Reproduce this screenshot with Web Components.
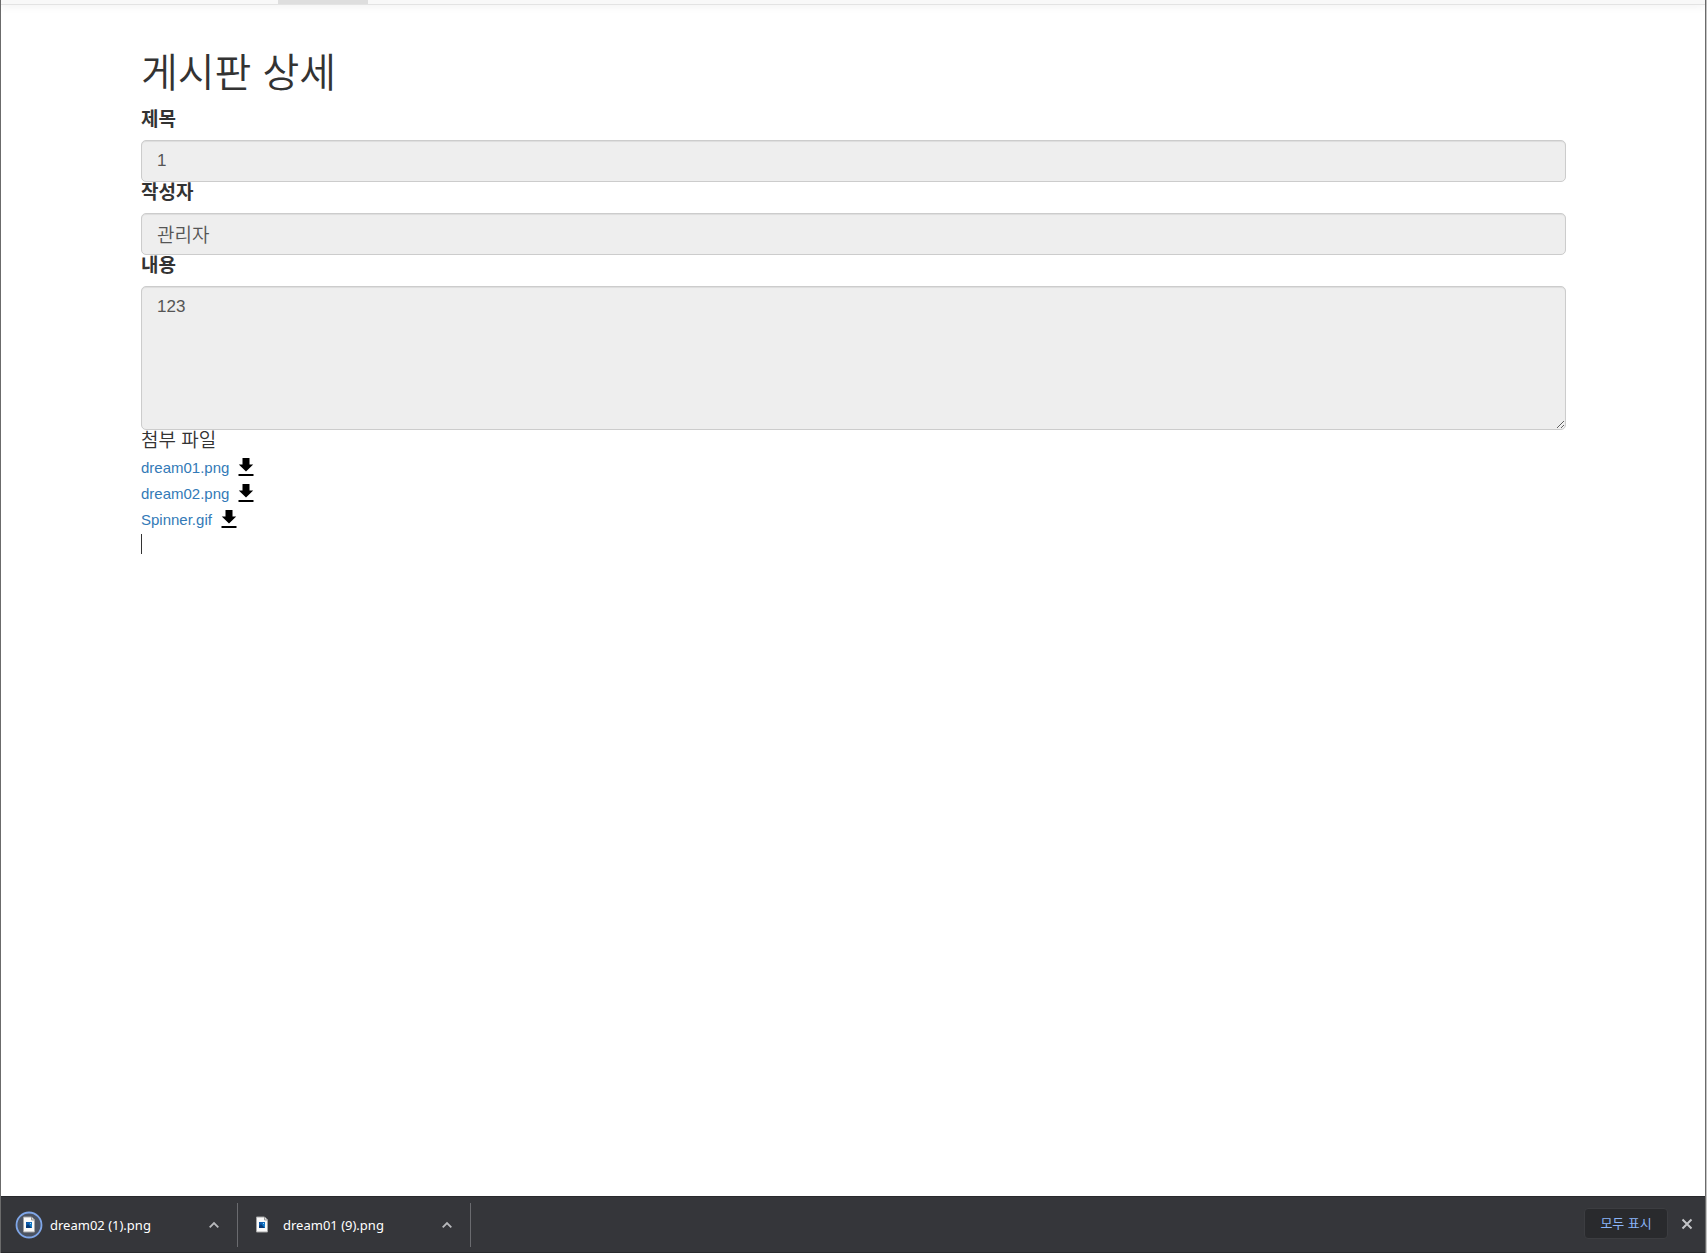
<!DOCTYPE html>
<html lang="ko">
<head>
<meta charset="UTF-8">
<meta name="viewport" content="width=device-width, initial-scale=1">
<title>게시판 상세</title>
<style>
html, body {
    height: 100%;
    margin: 0;
}

body {
    font-family: "Liberation Sans", "Noto Sans CJK KR", sans-serif;
    font-size: 19px;
    line-height: 25px;
    color: #333;
    background: #fff;
}
</style>
</head>
<body>

<app-window>
    <nav-strip slot="top"></nav-strip>
    <board-detail heading="게시판 상세">
        <form-field label="제목" value="1" numeric></form-field>
        <form-field label="작성자" value="관리자"></form-field>
        <form-field label="내용" value="123" numeric multiline></form-field>
        <file-list heading="첨부 파일">
            <file-link name="dream01.png"></file-link>
            <file-link name="dream02.png"></file-link>
            <file-link name="Spinner.gif"></file-link>
        </file-list>
    </board-detail>
    <download-shelf slot="bottom">
        <download-item active>dream02 (1).png</download-item>
        <download-item>dream01 (9).png</download-item>
    </download-shelf>
</app-window>

<script>
// < ======================================================
// < Base Class
// < ======================================================

/**
 * Base element that renders its own markup into an open shadow root
 *
 * @extends HTMLElement
 */
class BaseElement extends HTMLElement {

    constructor() {
        super();
        this.attachShadow({ mode: 'open' });
    }

    connectedCallback() {
        this.shadowRoot.innerHTML = `
            <style>* { box-sizing: border-box; }</style>
            ${this.render()}
        `;
    }

    /** @returns {string} Markup for the shadow root */
    render() {
        return '<slot></slot>';
    }

}

// < ======================================================
// < Window Frame
// < ======================================================

class AppWindow extends BaseElement {

    render() {
        return `
            <style>
                :host {
                    box-sizing: border-box;
                    min-height: 100%;
                    display: flex;
                    flex-direction: column;
                    border-left: 1px solid #6b6b6b;
                    border-right: 1px solid #c4c4c4;
                }
                .frame {
                    flex: 1;
                    display: flex;
                    flex-direction: column;
                    border-right: 1px solid #6b6b6b;
                }
                main {
                    flex: 1;
                }
            </style>
            <div class="frame">
                <slot name="top"></slot>
                <main><slot></slot></main>
                <slot name="bottom"></slot>
            </div>
        `;
    }

}

/**
 * Lower edge of the navigation bar, with the selected tab
 */
class NavStrip extends BaseElement {

    render() {
        return `
            <style>
                :host {
                    height: 5px;
                    display: flex;
                    background: #f8f8f8;
                    border-bottom: 1px solid #e3e3e3;
                    box-shadow: 0 1px 8px rgba(0, 0, 0, 0.08);
                    box-sizing: border-box;
                }
                .tab {
                    width: 90px;
                    margin-left: 277px;
                    background: #dedede;
                }
            </style>
            <div class="tab"></div>
        `;
    }

}

// < ======================================================
// < Board Detail
// < ======================================================

class BoardDetail extends BaseElement {

    render() {
        return `
            <style>
                :host {
                    display: block;
                    padding: 44px 139px 0 140px;
                }
                h1 {
                    margin: 0 0 12px;
                    font-size: 40px;
                    font-weight: 350;
                    line-height: 48px;
                }
            </style>
            <h1>${this.getAttribute('heading')}</h1>
            <slot></slot>
        `;
    }

}

/**
 * Read-only labelled field
 * - `multiline` makes it a textarea
 * - `numeric` uses the smaller size for digits
 */
class FormField extends BaseElement {

    render() {
        const value = this.getAttribute('value');
        const control = this.hasAttribute('multiline')
            ? `<textarea id="control" readonly>${value}</textarea>`
            : `<input id="control" type="text" value="${value}" readonly>`;
        return `
            <style>
                :host {
                    display: block;
                }
                label {
                    display: block;
                    height: 25px;
                    margin-bottom: 6px;
                    line-height: 22px;
                    font-weight: 700;
                }
                input, textarea {
                    display: block;
                    width: 100%;
                    height: 42px;
                    margin: 0;
                    padding: 7px 15px 8px;
                    font: inherit;
                    font-weight: 350;
                    color: #555;
                    background: #eee;
                    border: 1px solid #ccc;
                    border-radius: 5px;
                    box-shadow: inset 0 1px 1px rgba(0, 0, 0, 0.075);
                    outline: none;
                }
                :host([numeric]) input, :host([numeric]) textarea {
                    font-size: 17px;
                }
                textarea {
                    height: 144px;
                    resize: vertical;
                }
            </style>
            <label for="control">${this.getAttribute('label')}</label>
            ${control}
        `;
    }

}

class FileList extends BaseElement {

    render() {
        return `
            <style>
                :host {
                    display: block;
                    font-size: 15px;
                }
                .heading {
                    font-size: 19px;
                    font-weight: 350;
                    line-height: 22px;
                    padding-bottom: 2px;
                }
                .caret {
                    width: 1px;
                    height: 20px;
                    margin-top: 2px;
                    background: #333;
                }
            </style>
            <div class="heading">${this.getAttribute('heading')}</div>
            <slot></slot>
            <div class="caret"></div>
        `;
    }

}

class FileLink extends BaseElement {

    render() {
        const name = this.getAttribute('name');
        return `
            <style>
                :host {
                    height: 26px;
                    display: flex;
                    align-items: center;
                    gap: 9px;
                }
                a {
                    color: #337ab7;
                    text-decoration: none;
                }
                button {
                    display: flex;
                    padding: 0 0 1px;
                    border: 0;
                    background: none;
                    cursor: pointer;
                }
            </style>
            <a href="#${name}">${name}</a>
            <button type="button" aria-label="${name} download">
                <svg width="16" height="18" viewBox="0 0 16 18">
                    <path d="M4.500 0h7v6.500h3.700L8 13.500.8 6.500h3.700zM.5 16h15v2H.5z"/>
                </svg>
            </button>
        `;
    }

}

// < ======================================================
// < Download Shelf
// < ======================================================

class DownloadShelf extends BaseElement {

    render() {
        return `
            <style>
                :host {
                    height: 57px;
                    box-sizing: border-box;
                    display: flex;
                    align-items: center;
                    padding: 0 9px 0 4px;
                    font-family: "Noto Sans", "Noto Sans CJK KR", sans-serif;
                    font-size: 13px;
                    line-height: 20px;
                    color: #fff;
                    background: #35363a;
                    border-top: 1px solid #28292c;
                    border-bottom: 1px solid #28292c;
                }
                .items {
                    flex: 1;
                    display: flex;
                }
                .actions {
                    display: flex;
                    align-items: center;
                    gap: 10px;
                    padding-bottom: 2px;
                }
                button {
                    font: inherit;
                    cursor: pointer;
                }
                .all {
                    width: 84px;
                    height: 31px;
                    padding: 0 0 2px;
                    color: #8ab4f8;
                    background: #292a2d;
                    border: 1px solid #3c3d41;
                    border-radius: 4px;
                }
                .close {
                    display: flex;
                    padding: 3px;
                    border: 0;
                    background: none;
                }
            </style>
            <div class="items"><slot></slot></div>
            <div class="actions">
                <button class="all" type="button">모두 표시</button>
                <button class="close" type="button" aria-label="닫기">
                    <svg width="12" height="12" viewBox="0 0 12 12" stroke="#c4c5c8" stroke-width="2">
                        <path d="M1.500 1.500l9 9m0-9l-9 9"/>
                    </svg>
                </button>
            </div>
        `;
    }

}

/**
 * Single download, ringed while `active` is set
 */
class DownloadItem extends BaseElement {

    render() {
        const ring = this.hasAttribute('active')
            ? '<circle cx="14" cy="14" r="12.500" fill="#4b5362" stroke="#7fa6e8" stroke-width="1.800"/>'
            : '';
        return `
            <style>
                :host {
                    width: 233px;
                    height: 44px;
                    box-sizing: border-box;
                    display: flex;
                    align-items: center;
                    padding: 0 16px 0 10px;
                    border-right: 1px solid #6a6b6f;
                }
                .name {
                    flex: 1;
                    padding: 1px 0 0 7px;
                    white-space: nowrap;
                }
                button {
                    display: flex;
                    padding: 2px;
                    border: 0;
                    background: none;
                    cursor: pointer;
                }
            </style>
            <svg width="28" height="28" viewBox="0 0 28 28">
                <defs>
                    <linearGradient id="sky" x2="1" y2="1">
                        <stop offset="0" stop-color="#0b4da0"/>
                        <stop offset="1" stop-color="#1791dd"/>
                    </linearGradient>
                </defs>
                ${ring}
                <path d="M8.500 6h8l3 3v12h-11z" fill="#fafafa" stroke="#a5a5a5"/>
                <path d="M16.500 6v3h3" fill="#ddd" stroke="#999"/>
                <path d="M11 11h6v6h-6z" fill="url(#sky)"/>
                <path d="M11 15l2-2 4 4h-6z" fill="#083b79"/>
                <path d="M15 12h1v1h-1z" fill="#9bd8ff"/>
            </svg>
            <span class="name"><slot></slot></span>
            <button type="button" aria-label="메뉴">
                <svg width="10" height="8" viewBox="0 0 10 8" fill="none" stroke="#b9babd" stroke-width="1.800">
                    <path d="M.7 6.300L5 2l4.300 4.300"/>
                </svg>
            </button>
        `;
    }

}

// < ======================================================
// < Custom Element Registration
// < ======================================================

customElements.define('app-window', AppWindow);
customElements.define('nav-strip', NavStrip);
customElements.define('board-detail', BoardDetail);
customElements.define('form-field', FormField);
customElements.define('file-list', FileList);
customElements.define('file-link', FileLink);
customElements.define('download-shelf', DownloadShelf);
customElements.define('download-item', DownloadItem);
</script>
</body>
</html>
